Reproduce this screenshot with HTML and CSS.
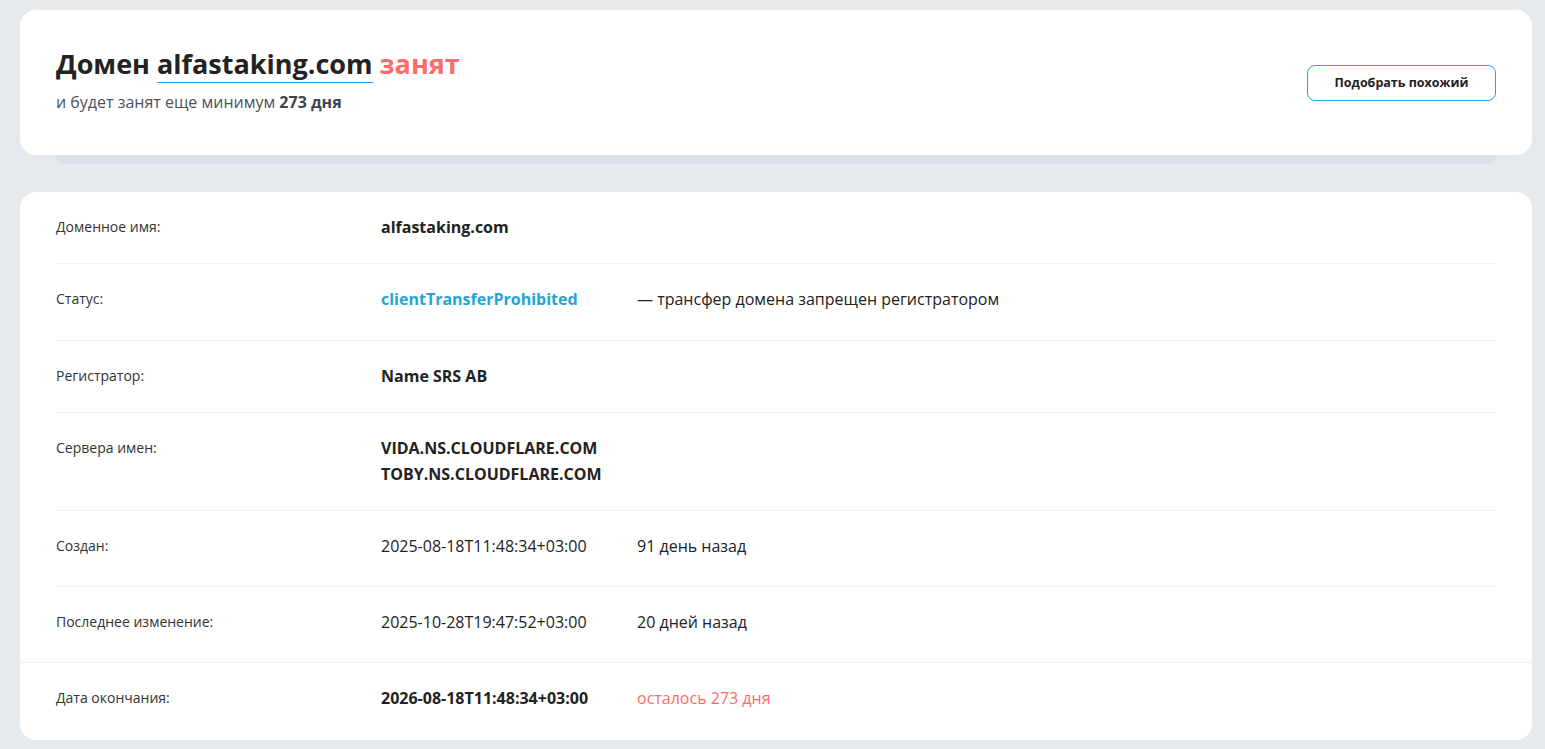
FILE: index.html
```html
<!DOCTYPE html>
<html lang="ru">
<head>
    <meta charset="UTF-8">
    <title>alfastaking.com — Whois</title>
    <link rel="stylesheet" href="styles.css">
</head>
<body>
    <div class="page">
        <section class="head-card">
            <div class="head-text">
                <h1 class="head-title">Домен <a class="domain-link" href="#">alfastaking.com</a> <span class="busy">занят</span></h1>
                <p class="head-sub">и будет занят еще минимум <b>273 дня</b></p>
            </div>
            <button class="similar-btn">Подобрать похожий</button>
        </section>
        <div class="head-shadow"></div>

        <section class="info-card">
            <div class="row">
                <div class="row-label">Доменное имя:</div>
                <div class="row-value strong">alfastaking.com</div>
            </div>
            <div class="row with-note">
                <div class="row-label">Статус:</div>
                <div class="row-value strong status">clientTransferProhibited</div>
                <div class="row-note">— трансфер домена запрещен регистратором</div>
            </div>
            <div class="row">
                <div class="row-label">Регистратор:</div>
                <div class="row-value strong">Name SRS AB</div>
            </div>
            <div class="row">
                <div class="row-label">Сервера имен:</div>
                <div class="row-value strong">VIDA.NS.CLOUDFLARE.COM<br>TOBY.NS.CLOUDFLARE.COM</div>
            </div>
            <div class="row with-note date">
                <div class="row-label">Создан:</div>
                <div class="row-value">2025-08-18T11:48:34+03:00</div>
                <div class="row-note">91 день назад</div>
            </div>
            <div class="row with-note date">
                <div class="row-label">Последнее изменение:</div>
                <div class="row-value">2025-10-28T19:47:52+03:00</div>
                <div class="row-note">20 дней назад</div>
            </div>
            <div class="row with-note last">
                <div class="row-label">Дата окончания:</div>
                <div class="row-value strong">2026-08-18T11:48:34+03:00</div>
                <div class="row-note left">осталось 273 дня</div>
            </div>
        </section>
    </div>
</body>
</html>
```

FILE: styles.css
```css
body, html {
    margin: 0;
    padding: 0;
    background-color: #e5eaef;
    font-family: "Open Sans", "Noto Sans", sans-serif;
    color: #222;
}
.page {
    padding: 10px 13px 9px 20px;
}
.head-card {
    background-color: #fff;
    border-radius: 16px;
    display: flex;
    align-items: center;
    justify-content: space-between;
    padding: 0 36px;
    height: 145px;
    position: relative;
    z-index: 1;
}
.head-title {
    margin: 0;
    font-size: 27px;
    font-weight: 700;
    line-height: 36px;
    color: #222;
    margin-top: -7px;
}
.domain-link {
    color: #222;
    text-decoration: none;
    border-bottom: 1px solid #1ea7d7;
}
.busy {
    color: #ff6b6b;
}
.head-sub {
    margin: 9px 0 0;
    font-size: 16px;
    color: #4b5259;
}
.head-sub b {
    color: #3d4550;
}
.similar-btn {
    font-family: "Open Sans", sans-serif;
    font-size: 12.5px;
    font-weight: 700;
    color: #222;
    background-color: #fff;
    border: 1px solid #1ea7d7;
    border-radius: 8px;
    width: 189px;
    height: 36px;
    cursor: pointer;
}
.head-shadow {
    height: 9px;
    margin: 0 36px;
    background-color: #dae0e7;
    border-radius: 0 0 8px 8px;
}
.info-card {
    margin-top: 28px;
    background-color: #fff;
    border-radius: 16px;
    padding: 0 0 1px;
}
.row {
    display: flex;
    align-items: flex-start;
    margin: 0 36px;
    padding: 22px 0 23px;
    border-bottom: 1px solid #eef0f2;
    line-height: 26px;
}
.row.with-note {
    padding-bottom: 28px;
}
.row.date {
    padding-bottom: 27px;
}
.row.last {
    border-bottom: none;
    border-top: 1px solid #eef0f2;
    margin: 0;
    margin-top: -1px;
    padding: 22px 36px 28px;
}
.row-label {
    width: 325px;
    flex-shrink: 0;
    font-size: 14px;
    color: #333;
}
.row-value {
    width: 256px;
    flex-shrink: 0;
    font-size: 16px;
    color: #222;
}
.row-value.strong {
    font-weight: 700;
}
.status {
    color: #23a6d6;
}
.row-note {
    font-size: 16px;
    color: #222;
}
.row-note.left {
    color: #ff6b6b;
}
```
